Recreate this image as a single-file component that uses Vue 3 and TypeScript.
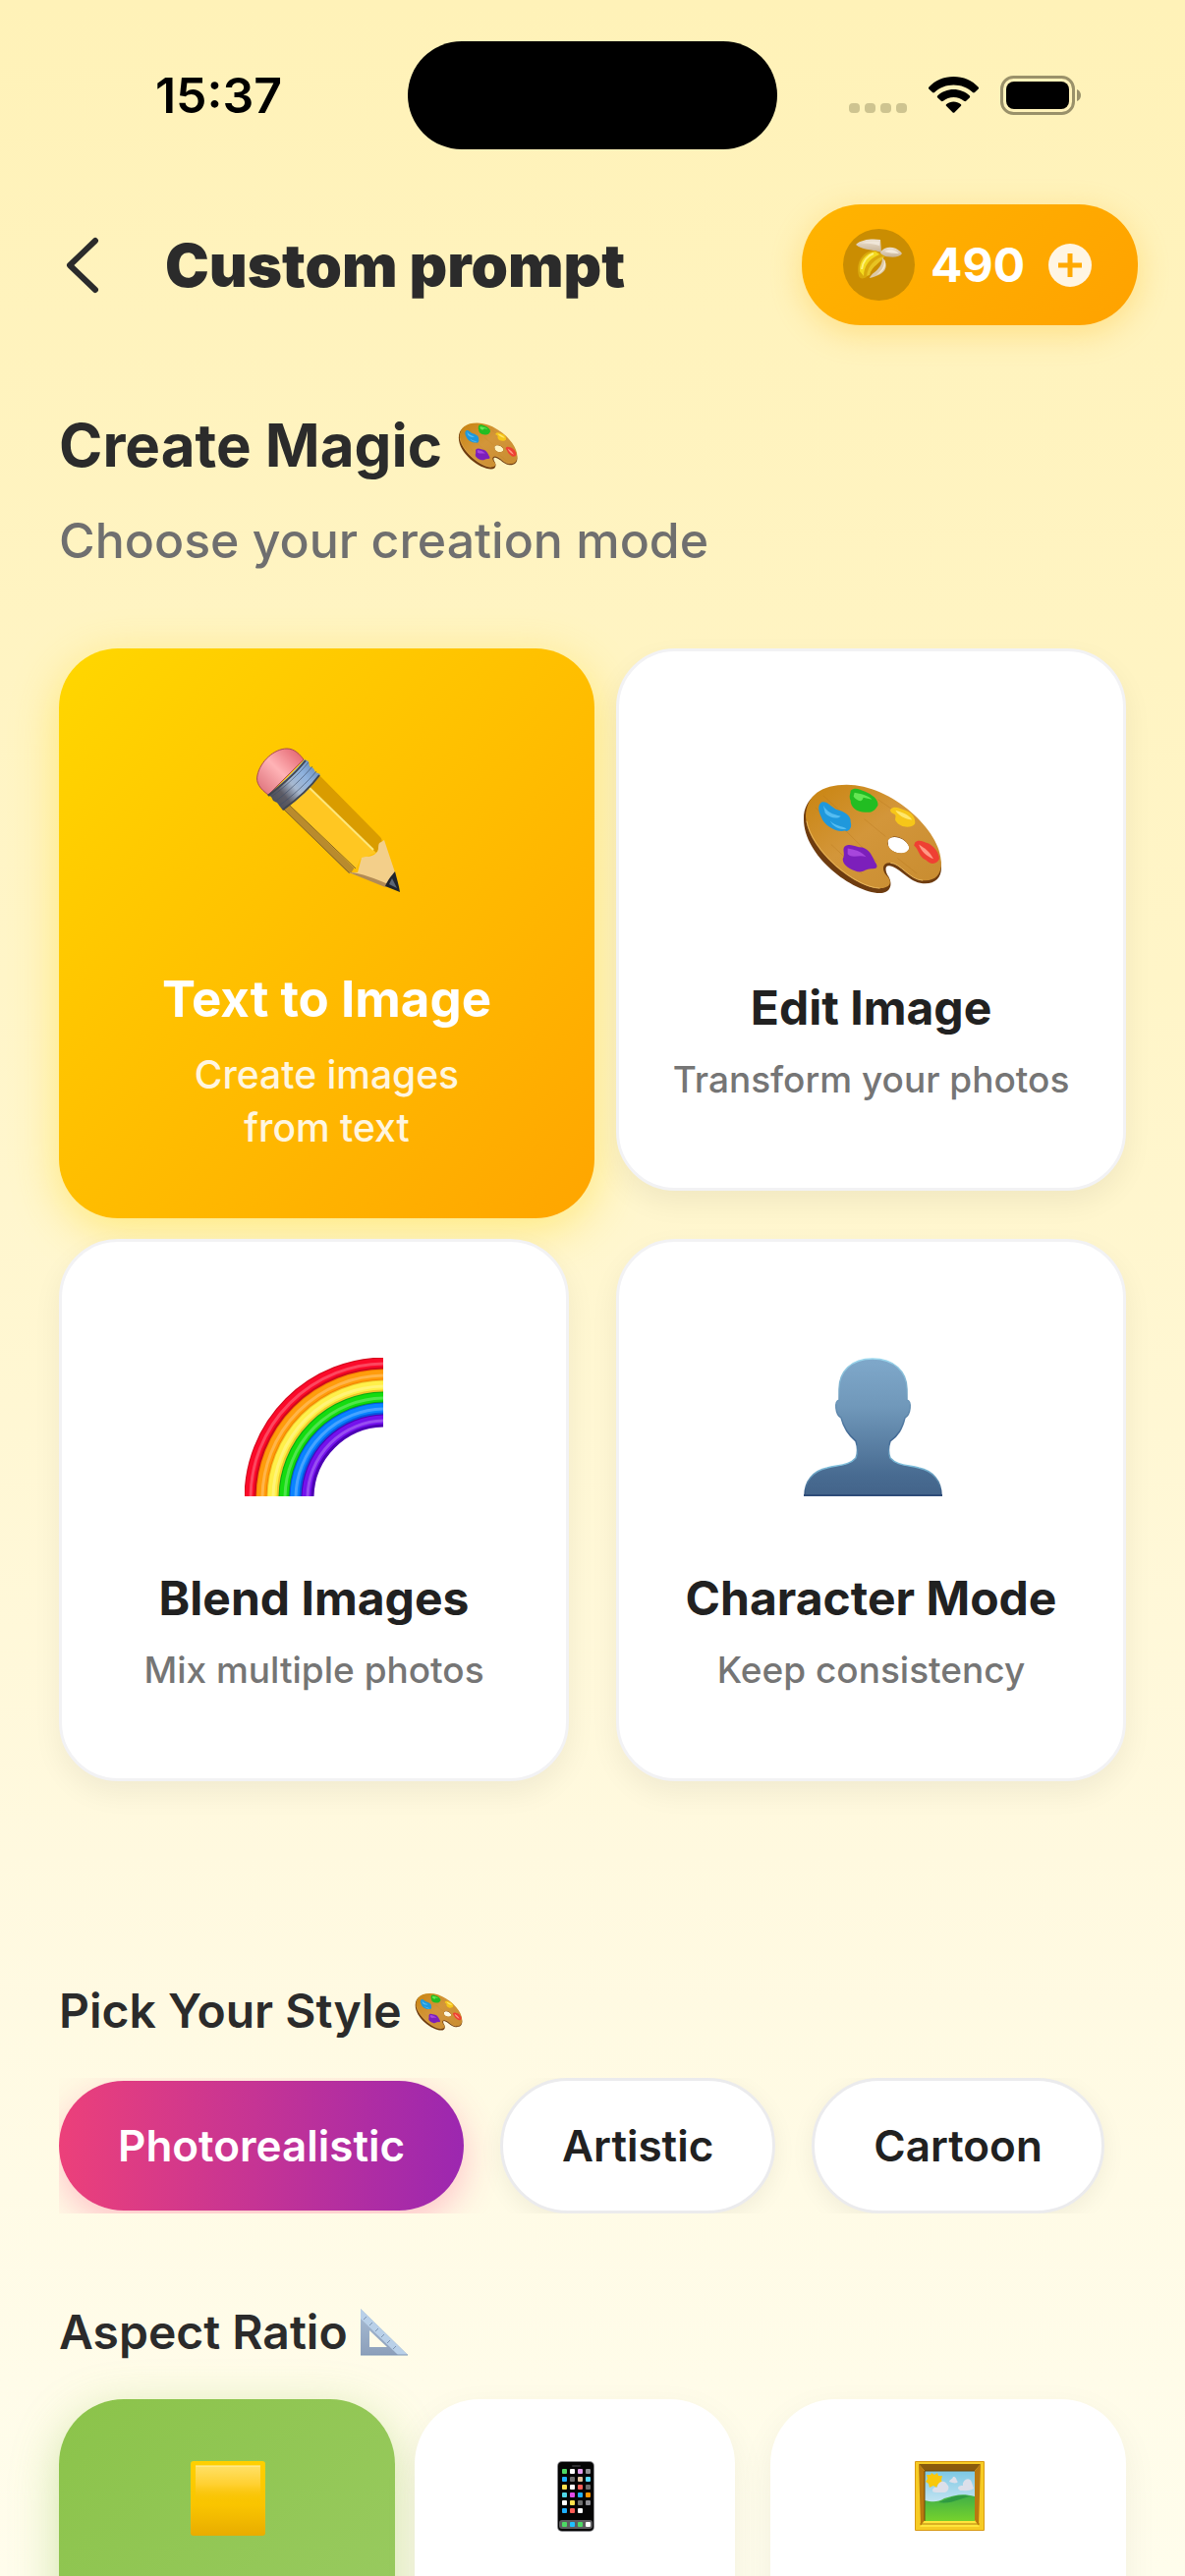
<script setup lang="ts">
import { ref } from 'vue'

interface Mode {
  id: string
  icon: string
  title: string
  text: string
}

const modes: Mode[] = [
  { id: 'text', icon: 'pencil', title: 'Text to Image', text: 'Create images from text' },
  { id: 'edit', icon: 'palette', title: 'Edit Image', text: 'Transform your photos' },
  { id: 'blend', icon: 'rainbow', title: 'Blend Images', text: 'Mix multiple photos' },
  { id: 'character', icon: 'person', title: 'Character Mode', text: 'Keep consistency' },
]
const styles: string[] = ['Photorealistic', 'Artistic', 'Cartoon']
const ratios: string[] = ['square', 'phone', 'frame']

const mode = ref('text')
const style = ref('Photorealistic')
const ratio = ref('square')
const coins = ref(490)

const appColors: string[] = [
  '#4cd964', '#ffffff', '#e29bea', '#8e8e93',
  '#1fb0ff', '#6d6d6d', '#e0c3a0', '#55d8ff',
  '#ffe14d', '#ffffff', '#ff5e57', '#6d6d6d',
  '#4fd8e8', '#e24be8', '#1fb0ff', '#ff9500',
  '#ffffff', '#ffe14d', '#6d6d6d', '#8e8e93',
  '#1fb0ff', '#ff5e57', '#ffffff',
]
const dockColors: string[] = ['#4cd964', '#1fc0ff', '#4cd964', '#ffffff']
const bands: { r: number; color: string; edge: string }[] = [
  { r: 137, color: '#fb0a2a', edge: '#d0081c' },
  { r: 125, color: '#ff9c0c', edge: '#f58200' },
  { r: 114, color: '#fff04a', edge: '#eec52a' },
  { r: 102, color: '#14dc10', edge: '#08a810' },
  { r: 91, color: '#0a84ff', edge: '#0658e0' },
  { r: 79, color: '#7412ec', edge: '#4c00b4' },
]
</script>

<template>
  <div class="screen">
    <svg class="sprite" aria-hidden="true">
      <defs>
        <linearGradient id="wood" x1="0" y1="0" x2="1" y2="1">
          <stop offset="0" stop-color="#c9840f" />
          <stop offset=".45" stop-color="#d3963a" />
          <stop offset="1" stop-color="#c88c30" />
        </linearGradient>
        <linearGradient id="person-fill" x1="0" y1="0" x2="0" y2="1">
          <stop offset="0" stop-color="#7fa8ca" />
          <stop offset=".35" stop-color="#7098ba" />
          <stop offset=".85" stop-color="#486b91" />
          <stop offset="1" stop-color="#43648a" />
        </linearGradient>
        <linearGradient id="person-rim" x1="0" y1="0" x2="0" y2="1">
          <stop offset="0" stop-color="#9cd8ee" />
          <stop offset=".3" stop-color="#6d98ba" />
          <stop offset=".6" stop-color="#3e6490" />
          <stop offset=".78" stop-color="#83c4e0" />
          <stop offset="1" stop-color="#2e4c78" />
        </linearGradient>
        <linearGradient id="eraser" x1="0" y1="1" x2="1" y2="0">
          <stop offset="0" stop-color="#d96a74" />
          <stop offset=".5" stop-color="#ffb3b6" />
          <stop offset="1" stop-color="#e05a66" />
        </linearGradient>
        <linearGradient id="ferrule" x1="12" y1="56" x2="58" y2="16" gradientUnits="userSpaceOnUse">
          <stop offset="0" stop-color="#4a4c54" />
          <stop offset=".28" stop-color="#5d5c66" />
          <stop offset=".5" stop-color="#a7b8cf" />
          <stop offset=".75" stop-color="#8fb2de" />
          <stop offset="1" stop-color="#6d8fbc" />
        </linearGradient>
        <linearGradient id="gold-square" x1="0" y1="0" x2="0" y2="1">
          <stop offset="0" stop-color="#ffd000" />
          <stop offset=".6" stop-color="#f9c400" />
          <stop offset="1" stop-color="#e8ac00" />
        </linearGradient>
        <linearGradient id="gold-face" x1="0" y1="0" x2="0" y2="1">
          <stop offset="0" stop-color="#ffe066" />
          <stop offset=".5" stop-color="#ffd030" />
          <stop offset="1" stop-color="#f4bc00" stop-opacity="0" />
        </linearGradient>
        <linearGradient id="sky" x1="0" y1="0" x2="0" y2="1">
          <stop offset="0" stop-color="#7cc8e4" />
          <stop offset="1" stop-color="#eef4fa" />
        </linearGradient>
        <linearGradient id="grass" x1="0" y1="0" x2="0" y2="1">
          <stop offset="0" stop-color="#3fae48" />
          <stop offset="1" stop-color="#76d22c" />
        </linearGradient>
        <linearGradient id="steel" x1="0" y1="0" x2="0" y2="1">
          <stop offset="0" stop-color="#a9bed6" />
          <stop offset="1" stop-color="#8c9fba" />
        </linearGradient>
        <linearGradient id="peel" x1="0" y1="0" x2="0" y2="1">
          <stop offset="0" stop-color="#efe3d3" />
          <stop offset="1" stop-color="#c7b294" />
        </linearGradient>
      </defs>

      <symbol id="palette" viewBox="-2 -17 142 142" overflow="visible">
        <path fill="#6e3c10" fill-rule="evenodd" d="M0 36C0 14 18 3 44 3C90 3 141 52 141 86C141 97 134 103 122 102C108 101 99 86 88 84C82 83 84 91 87 95C92 104 88 112 78 112C50 111 0 74 0 36ZM86 58C90 51 104 55 108 64C109 74 93 73 87 65Z" />
        <path fill="url(#wood)" fill-rule="evenodd" d="M2 33C3 12 18 1 44 1C90 1 141 48 141 81C141 94 134 100 122 99C108 98 99 81 88 81C80 81 80 89 85 94C92 101 88 107 78 107C52 107 3 66 2 33ZM86 61C88 72 105 74 108 66C108 59 98 53 92 54C88 55 86 57 86 61Z" />
        <path fill="none" stroke="#e6b45c" stroke-width="1" d="M3 38C8 68 52 106 78 107M89 81C99 81 108 98 122 99" />
        <path fill="none" stroke="#b5731b" stroke-opacity=".35" d="M20 12L44 34M12 24L32 46M40 45L75 80M62 36L84 54M28 62L60 92M76 16L92 27M96 76L116 92" />
        <path fill="#22bd22" d="M48 7C53 3 57 6 63 8C70 11 77 16 76 22C73 27 70 30 63 29C54 29 48 24 48 17C46 13 48 10 48 7Z" />
        <path fill="#65e654" d="M52 9C58 10 66 12 70 16L61 14C60 20 54 17 51 13Z" />
        <path fill="#1f98dc" d="M18 19C24 17 27 23 33 26C42 28 49 33 48 39C50 45 46 50 42 48C34 50 21 43 18 34C15 28 14 22 18 19Z" />
        <path fill="#55bdf2" d="M20 22C24 29 29 31 38 33C34 37 26 34 22 30ZM27 38C33 44 39 43 44 46C37 48 30 44 27 38Z" />
        <path fill="#f6c619" d="M89 26C93 22 98 25 104 27C111 29 115 35 114 41C110 46 99 45 95 39C92 36 96 33 93 31C90 30 88 28 89 26Z" />
        <path fill="#ffe76d" d="M94 27C100 29 108 31 111 37C106 36 98 34 94 27Z" />
        <path fill="#ef4033" d="M114 60C118 56 123 60 128 61C133 64 139 70 139 77C136 83 130 83 125 78C118 75 118 67 113 63Z" />
        <path fill="#ff9a86" d="M118 62C124 66 129 69 133 77C126 74 120 69 118 62Z" />
        <path fill="#7c1fbb" d="M42 64C48 60 53 65 60 65C67 67 70 73 73 80C76 84 76 87 71 87C64 86 62 91 55 90C48 88 40 84 40 77C43 72 39 67 42 64Z" />
        <path fill="#a746dc" d="M45 66C51 67 60 69 64 75C57 72 50 77 45 72Z" />
      </symbol>

      <symbol id="pencil" viewBox="-2 0 147 148" overflow="visible">
        <path fill="url(#eraser)" stroke="#a84a52" d="M12 48C4 42 -1 36 1 28C4 14 18 1 31 1C39 1 44 7 48 12Z" />
        <path fill="#b98b2d" d="M27 62L34 55L106 112L96 128L94 128Z" />
        <path fill="#ffc722" d="M33 58L54 37L122 107L106 113L101 124Z" />
        <path fill="#d99c00" d="M52 39L64 28L126 91C129 94 128 98 122 107Z" />
        <path fill="none" stroke="#ffe77a" stroke-width="2" d="M52 39L119 104" />
        <path fill="none" stroke="#8a681f" d="M33 58L101 123M28 63L95 128" />
        <path fill="#f3cf8a" d="M94 127L103 127L107 112C112 110 118 112 122 107C126 104 122 97 127 96L130 94L141 127L132 141Z" />
        <path fill="#b28b55" d="M94 127C106 127 122 134 134 139L131 142Z" />
        <path fill="#20242c" d="M141 126C143 134 145 140 146 147L131 141C134 134 137 131 141 126Z" />
        <path fill="#5c6676" d="M138 133L143 143L135 139Z" />
        <path fill="url(#ferrule)" d="M11 48C22 40 39 24 49 12L53 14L54 19L58 21L60 25L65 27C58 39 40 55 27 64L24 60L21 56L17 54L15 50Z" />
        <path fill="none" stroke="#3e4d66" stroke-opacity=".6" stroke-width="1" d="M15 50C28 41 44 26 53 15M19 55C32 45 48 30 57 19M23 59C36 50 52 35 61 24" />
        <path fill="none" stroke="#41464f" stroke-width="2" d="M12 49C26 38 40 26 50 13M27 63C41 53 56 39 64 28" />
      </symbol>

      <symbol id="rainbow" viewBox="0 0 141 141">
        <g fill="none">
          <template v-for="b in bands" :key="b.r">
            <circle cx="143" cy="143" :r="b.r" :stroke="b.edge" stroke-width="13" />
            <circle cx="143" cy="143" :r="b.r + 1" :stroke="b.color" stroke-width="9" />
            <circle cx="143" cy="143" :r="b.r" stroke="#fff" stroke-opacity=".25" stroke-width="3" />
          </template>
        </g>
      </symbol>

      <symbol id="person" viewBox="-2 0 141 141" overflow="visible">
        <path fill="url(#person-fill)" stroke="url(#person-rim)" stroke-width="1.5" d="M70 1C48 1 36 14 36 32L36 43C31 44 32 58 38 61C41 73 46 79 53 85C55 91 55 97 53 102C46 110 34 109 24 112C9 115 1 126 1 140L140 140C140 126 132 115 117 112C107 109 95 110 88 102C86 97 86 91 88 85C96 79 100 73 103 61C109 58 110 44 105 43L105 32C105 14 92 1 70 1Z" />
        <path stroke="#2e4c78" stroke-width="2" d="M0 140H141" />
      </symbol>

      <symbol id="square" viewBox="-1 -1 76 76" overflow="visible">
        <rect width="76" height="76" rx="3" fill="url(#gold-square)" />
        <rect x="5" y="5" width="66" height="38" rx="1" fill="url(#gold-face)" />
        <path d="M5 5H71" stroke="#fff0a8" stroke-width="1" />
      </symbol>

      <symbol id="phone" viewBox="-20 -1 76 76">
        <rect x="0" y="0" width="38" height="72" rx="5" fill="#8a8a8e" />
        <rect x="1" y="1" width="36" height="70" rx="4" fill="#050505" />
        <rect x="15" y="4" width="9" height="2" rx="1" fill="#2e2e30" />
        <rect x="2" y="60" width="34" height="9" rx="3" fill="#5d5d5f" />
        <rect v-for="(c, i) in appColors" :key="'a' + i" :x="5 + (i % 4) * 8" :y="8 + Math.floor(i / 4) * 8" width="5" height="5" rx="1" :fill="c" />
        <rect v-for="(c, i) in dockColors" :key="'d' + i" :x="5 + i * 8" y="62" width="5" height="5" rx="1" :fill="c" />
      </symbol>

      <symbol id="frame" viewBox="-4 -1 76 76">
        <rect width="71" height="71" rx="1" fill="#d99a13" />
        <rect x="1" y="1" width="69" height="69" fill="#f6cb25" />
        <path fill="#8a5a0c" d="M4 3H67L61 10H10Z" />
        <path fill="#b9780f" d="M4 3L10 10V60L6 66Z M67 3L61 10V60L65 66Z" />
        <path fill="#ffe53b" d="M10 61H61L66 67H5Z" />
        <path fill="none" stroke="#b67c0c" d="M5 64H66" />
        <rect x="10" y="10" width="51" height="51" fill="url(#sky)" />
        <path fill="#f8c80c" d="M17 12l3 2 3-2 1 3 4 0-1 4 1 3-4 1-2 4-3-2-4 2-1-4-3-2 2-3-1-4 4 0z" />
        <path fill="#dcdfea" d="M18 30C18 27 21 26 23 27C23 21 30 18 33 24C36 26 34 32 30 32H22C19 32 18 31 18 30ZM35 21C36 18 38 19 39 16C42 16 42 18 43 20C45 22 42 23 38 22ZM44 28C44 25 47 25 49 25C48 19 56 15 58 22L60 28C56 31 50 30 46 30Z" />
        <path fill="url(#grass)" d="M10 40C18 42 24 42 30 38C38 36 46 32 61 36V61H10Z" />
        <path fill="#2f9a42" d="M24 42C36 38 44 33 56 36C46 38 38 44 24 42Z" />
        <path fill="none" stroke="#6f4706" stroke-width="1" d="M10 61V10H61" />
      </symbol>

      <symbol id="ruler" viewBox="0 0 48 48">
        <path fill="url(#steel)" fill-rule="evenodd" d="M0 0L48 47H0ZM9 22V39H27Z" />
        <path fill="#b9d0e8" d="M0 0L48 47H38L0 10Z" />
        <path fill="none" stroke="#7d95b2" stroke-width="1" d="M6 8l-3 3M12 14l-3 3M18 20l-3 3M24 26l-3 3M30 32l-3 3M36 38l-3 3M0 47H48" />
      </symbol>

      <symbol id="banana" viewBox="0 0 47 41">
        <path fill="url(#peel)" d="M0 6C6 0 18 0 25 1L26 14C18 11 7 12 0 6Z" />
        <path fill="#f0e6d8" d="M4 5C10 2 19 2 24 3L24 7C18 5 9 4 4 5Z" />
        <path fill="url(#peel)" d="M25 14C30 6 42 8 47 15C44 20 34 19 26 17Z" />
        <path fill="#f4eadb" d="M29 13C34 10 40 11 44 15C38 15 33 14 29 13Z" />
        <path fill="#d9a80c" d="M3 38C-1 24 8 11 20 12L30 18C20 22 14 28 11 39C8 41 4 41 3 38Z" />
        <path fill="#f3d91e" d="M4 33C3 23 10 14 20 13L24 16C14 20 8 28 8 38Z" />
        <path fill="none" stroke="#fff27a" stroke-width="2" d="M6 31C7 23 12 17 18 15" />
        <path fill="#e8c322" d="M11 38C12 28 20 19 29 18C26 24 16 28 14 37Z" />
        <path fill="#dcc9a8" d="M27 19C34 27 32 36 14 40C16 34 27 32 27 19Z" />
        <path fill="#f6ead4" d="M29 21C32 27 29 33 21 37C28 31 29 27 29 21Z" />
      </symbol>
    </svg>

    <div class="status">
      <span class="time">15:37</span>
      <span class="island"></span>
      <span class="signals">
        <svg width="59" height="40" viewBox="0 0 59 40" fill="#cec490" aria-hidden="true">
          <rect v-for="i in 4" :key="i" :x="(i - 1) * 16" y="28" width="11" height="10" rx="4" />
        </svg>
        <svg width="51" height="40" viewBox="0 0 51 40" aria-hidden="true">
          <path d="M25.5 1C35.500 1 44.500 5 50.500 11.500C51.300 12.300 51.200 13 50.500 13.700L47 17C46.300 17.700 45.600 17.600 44.900 17C39.800 12.200 33 9.500 25.500 9.500C18 9.500 11.200 12.200 6.100 17C5.400 17.600 4.700 17.700 4 17L.5 13.700C-.2 13 -.3 12.300 .5 11.500C6.500 5 15.500 1 25.500 1ZM25.500 14C31.600 14 37.300 16.300 41.600 20.200C42.400 20.900 42.400 21.700 41.700 22.400L38.200 25.800C37.500 26.500 36.800 26.400 36.100 25.800C33.200 23.300 29.500 21.900 25.500 21.900C21.500 21.900 17.800 23.300 14.900 25.800C14.200 26.400 13.500 26.500 12.800 25.800L9.300 22.400C8.600 21.700 8.600 20.900 9.400 20.200C13.700 16.300 19.400 14 25.500 14ZM25.500 26.500C28.200 26.500 30.700 27.400 32.700 29C33.500 29.700 33.500 30.400 32.800 31.100L26.600 37.200C25.900 37.900 25.100 37.900 24.400 37.200L18.200 31.100C17.500 30.400 17.500 29.700 18.300 29C20.300 27.400 22.800 26.500 25.500 26.500Z" />
        </svg>
        <svg width="82" height="40" viewBox="0 0 82 40" aria-hidden="true">
          <rect x="1.500" y="1.500" width="73" height="37" rx="12" fill="none" stroke="#9a916a" stroke-width="3" />
          <rect x="6" y="6" width="64" height="28" rx="8" />
          <path fill="#9a916a" d="M78 14C81 15 82 18 82 20C82 22 81 25 78 26Z" />
        </svg>
      </span>
    </div>

    <header class="header">
      <button class="back" type="button" aria-label="Back">
        <svg width="48" height="60" viewBox="0 0 48 60" fill="none" stroke="#2b2b2b" stroke-width="6" stroke-linecap="round" stroke-linejoin="round">
          <path d="M37 5L11 30L37 55" />
        </svg>
      </button>
      <h1>Custom prompt</h1>
      <button class="coins" type="button">
        <span class="coin"><svg width="47" height="41" aria-hidden="true"><use href="#banana" /></svg></span>
        <span>{{ coins }}</span>
        <svg width="44" height="44" viewBox="0 0 44 44" aria-hidden="true">
          <circle cx="22" cy="22" r="22" fill="#fff5e3" />
          <path d="M22 10V34M10 22H34" stroke="#ffa902" stroke-width="5" />
        </svg>
      </button>
    </header>

    <main class="content">
      <h2 class="headline">Create Magic <svg width="60" height="60" aria-hidden="true"><use href="#palette" /></svg></h2>
      <p class="lead">Choose your creation mode</p>

      <div class="modes">
        <button v-for="m in modes" :key="m.id" type="button" class="mode" :class="{ active: mode === m.id }" @click="mode = m.id">
          <svg class="mode-icon" aria-hidden="true"><use :href="'#' + m.icon" /></svg>
          <span class="mode-title">{{ m.title }}</span>
          <span class="mode-text">{{ m.text }}</span>
        </button>
      </div>

      <h3>Pick Your Style <svg width="48" height="48" aria-hidden="true"><use href="#palette" /></svg></h3>
      <div class="chips">
        <button v-for="s in styles" :key="s" type="button" class="chip" :class="{ active: style === s }" @click="style = s">{{ s }}</button>
      </div>

      <h3 class="ratio-heading">Aspect Ratio <svg width="48" height="48" aria-hidden="true"><use href="#ruler" /></svg></h3>
      <div class="ratios">
        <button v-for="r in ratios" :key="r" type="button" :aria-label="r" class="ratio" :class="[r, { active: ratio === r }]" @click="ratio = r">
          <svg width="76" height="76" aria-hidden="true"><use :href="'#' + r" /></svg>
        </button>
      </div>
    </main>
  </div>
</template>

<style>
body {
  margin: 0;
}
</style>

<style scoped>
.screen {
  box-sizing: border-box;
  height: 100vh;
  overflow: hidden;
  background: linear-gradient(180deg, #fff2b8 0%, #fff5c8 38%, #fff9df 72%, #fffbe6 85%, #fffdec 100%);
  color: #2b2b2b;
  font-family: Inter, "Noto Sans", sans-serif;
}
.sprite {
  position: absolute;
  width: 0;
  height: 0;
}
button {
  border: 0;
  padding: 0;
  background: none;
  color: inherit;
  font: inherit;
  cursor: pointer;
}
svg {
  overflow: visible;
}
h1,
h2,
h3,
p {
  margin: 0;
}

.status {
  display: grid;
  grid-template-columns: 1fr 376px 1fr;
  align-items: center;
  padding-top: 42px;
  color: #000;
}
.time {
  padding-left: 30px;
  text-align: center;
  font-size: 50px;
  line-height: 60px;
  font-weight: 600;
}
.island {
  height: 110px;
  border-radius: 55px;
  background: #000;
}
.signals {
  display: flex;
  justify-content: flex-end;
  gap: 22px;
  padding-right: 106px;
}

.header {
  display: flex;
  align-items: center;
  padding: 56px 48px 0 60px;
}
.back {
  display: flex;
  margin-right: 60px;
}
h1 {
  flex: 1;
  font-size: 60px;
  line-height: 72px;
  font-weight: 900;
}
.coins {
  display: flex;
  align-items: center;
  height: 123px;
  padding: 0 47px 0 42px;
  border-radius: 60px;
  background: linear-gradient(135deg, #ffb400, #ffa200);
  box-shadow: 0 8px 32px rgba(255, 180, 0, 0.3);
  color: #fff;
  font-size: 48px;
  font-weight: 700;
}
.coin {
  display: flex;
  justify-content: center;
  width: 73px;
  height: 73px;
  box-sizing: border-box;
  padding-top: 10px;
  margin-right: 16px;
  border-radius: 50%;
  background: #ca8d02;
}
.coins > svg {
  margin-left: 24px;
}

.content {
  padding: 86px 60px 0;
}
.headline {
  display: flex;
  align-items: center;
  gap: 16px;
  font-size: 60px;
  line-height: 72px;
  font-weight: 700;
}
.lead {
  margin-top: 31px;
  color: #6f6f6f;
  font-size: 50px;
  line-height: 60px;
  font-weight: 500;
}

.modes {
  display: grid;
  grid-template-columns: 1fr 1fr;
  column-gap: 48px;
  row-gap: 21px;
  align-items: start;
  margin-top: 80px;
}
.mode {
  display: flex;
  flex-direction: column;
  align-items: center;
  box-sizing: border-box;
  min-height: 552px;
  padding-top: 118px;
  border: 3px solid #f2f2f4;
  border-radius: 60px;
  background: #fff;
  box-shadow: 0 12px 30px rgba(0, 0, 0, 0.06);
  color: #212121;
}
.mode-icon {
  width: 141px;
  height: 141px;
}
.mode-title {
  margin-top: 74px;
  font-size: 48px;
  line-height: 60px;
  font-weight: 700;
}
.mode-text {
  margin-top: 16px;
  color: #757575;
  font-size: 37px;
  line-height: 54px;
  font-weight: 500;
}
.mode.active {
  width: calc(100% + 26px);
  min-height: 580px;
  padding-top: 101px;
  border: 0;
  background: linear-gradient(135deg, #ffd700, #ffa500);
  box-shadow: 0 12px 48px rgba(255, 215, 0, 0.4);
  color: #fff;
}
.mode.active .mode-icon {
  width: 147px;
  height: 148px;
}
.mode.active .mode-title {
  margin-top: 78px;
  font-size: 51px;
}
.mode.active .mode-text {
  max-width: 330px;
  margin-top: 20px;
  color: #fff6e0;
  font-size: 39px;
}

h3 {
  display: flex;
  align-items: center;
  gap: 13px;
  margin-top: 204px;
  font-size: 48px;
  line-height: 60px;
  font-weight: 600;
}
.ratio-heading {
  margin-top: 91px;
}
.chips {
  display: flex;
  align-items: center;
  gap: 37px;
  margin-top: 38px;
  overflow: hidden;
}
.chip {
  box-sizing: border-box;
  height: 138px;
  padding: 0 60px;
  border: 3px solid #ebebed;
  border-radius: 69px;
  background: #fff;
  box-shadow: 0 6px 24px rgba(0, 0, 0, 0.06);
  color: #212121;
  font-size: 44px;
  line-height: 60px;
  font-weight: 600;
  white-space: nowrap;
}
.chip.active {
  height: 132px;
  border: 0;
  background: linear-gradient(90deg, #ec407a, #9c27b0);
  box-shadow: 0 12px 36px rgba(255, 64, 129, 0.3);
  color: #fff;
}

.ratios {
  display: flex;
  margin-top: 38px;
}
.ratio {
  flex: 362 1 0;
  display: flex;
  justify-content: center;
  align-items: flex-start;
  height: 360px;
  padding-top: 62px;
  border-radius: 66px;
  background: #fff;
  box-shadow: 0 12px 36px rgba(0, 0, 0, 0.06);
}
.ratio.phone {
  flex-grow: 326;
  margin: 0 36px 0 20px;
}
.ratio.active {
  flex-grow: 342;
  background: linear-gradient(135deg, #8bc34a, #9ccc65);
  box-shadow: 0 12px 48px rgba(139, 195, 74, 0.4);
}
</style>
